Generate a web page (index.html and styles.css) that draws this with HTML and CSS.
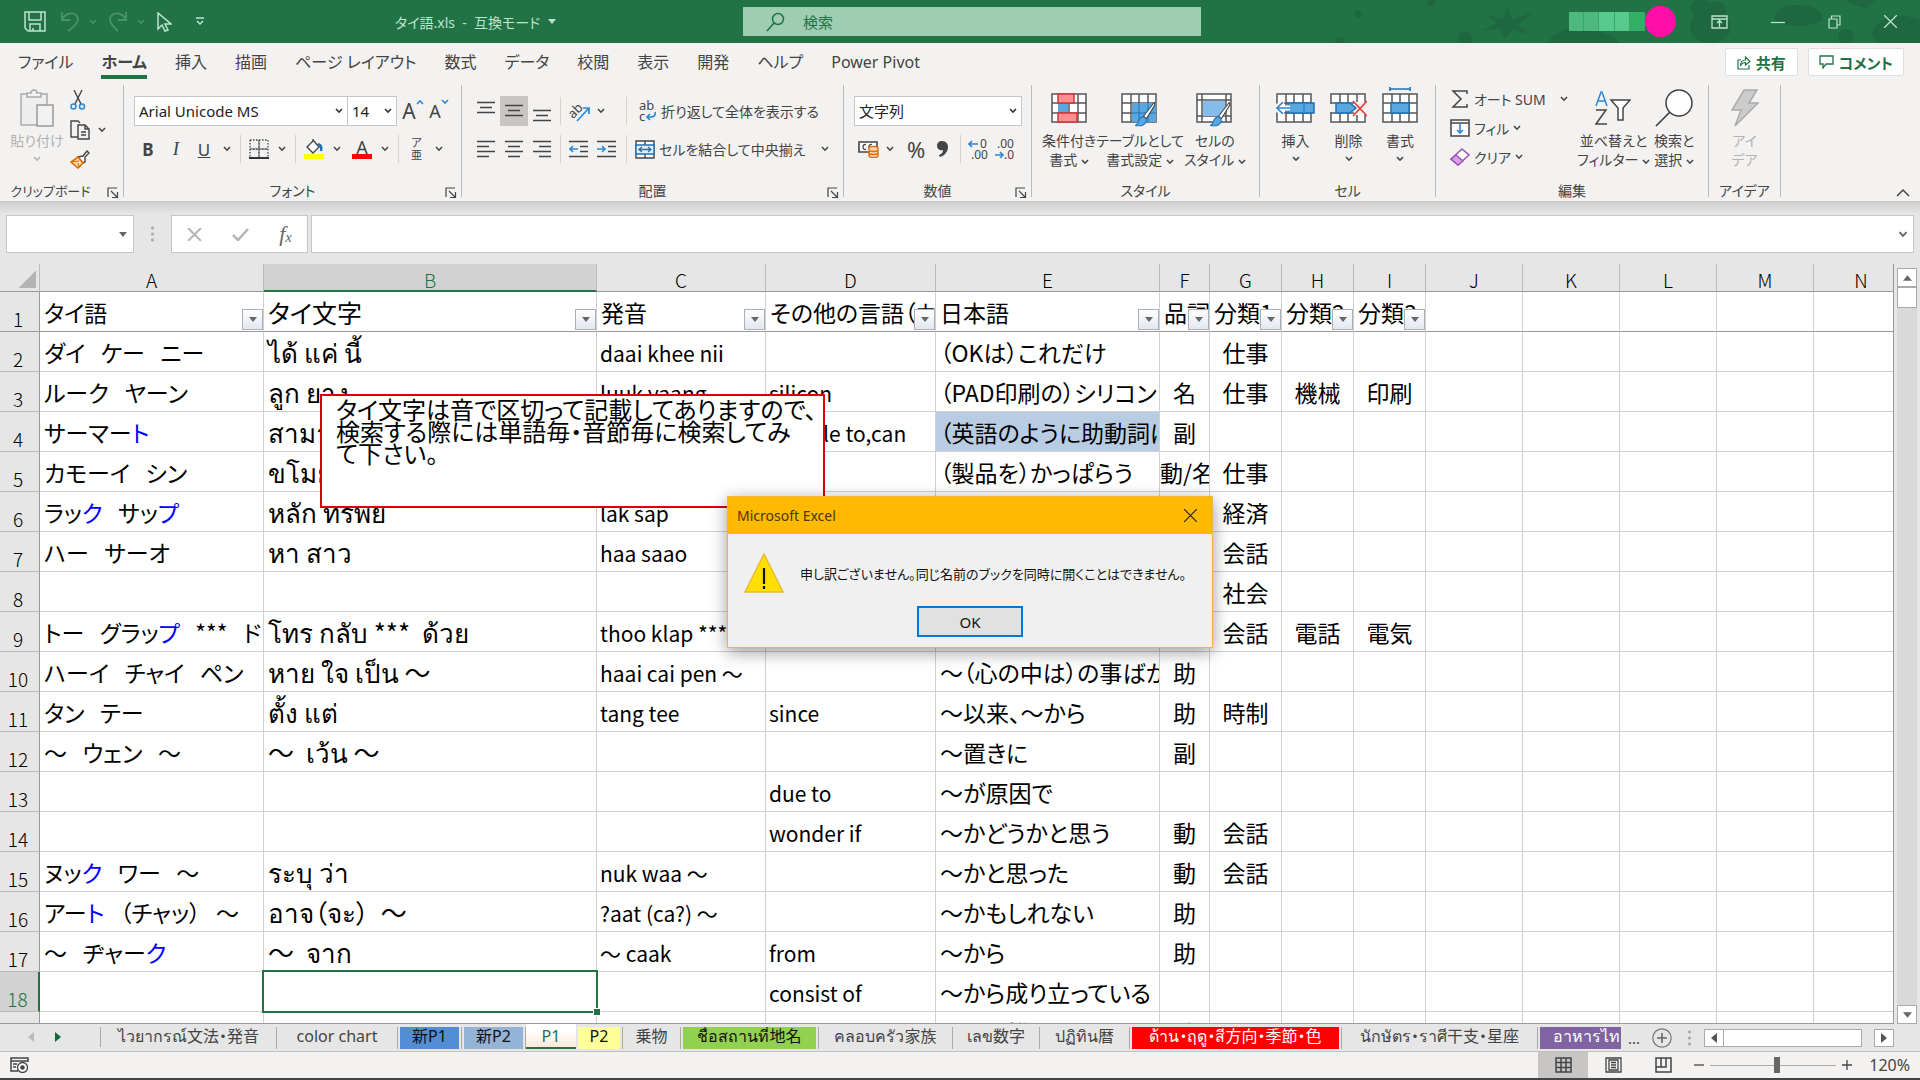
FILE: index.html
```html
<!DOCTYPE html>
<html lang="ja">
<head>
    <meta charset="UTF-8">
    <meta name="viewport" content="width=device-width, initial-scale=1.0">
    <title>タイ語.xls - 互換モード</title>
    <link rel="stylesheet" href="styles.css">
</head>
<body>
    <!-- Shared icons -->
    <svg class="sprite" width="0" height="0" aria-hidden="true">
        <symbol id="chev" viewBox="0 0 8 6"><path d="M1 1l3 3.2L7 1" fill="none" stroke="currentColor" stroke-width="1.6"/></symbol>
        <symbol id="tri" viewBox="0 0 8 5"><path d="M0 0h8L4 5z" fill="currentColor"/></symbol>
        <symbol id="launch" viewBox="0 0 12 12"><path d="M1 10V1h9M4 4l6 6M10.500 5v5.500H5" fill="none" stroke="currentColor" stroke-width="1.200"/></symbol>
        <symbol id="grid" viewBox="0 0 36 30"><path d="M1 1h34v28H1zM1 10h34M1 20h34M10 1v28M18 1v28M27 1v28" fill="#fff" stroke="#555" stroke-width="1.500"/></symbol>
        <symbol id="brush" viewBox="0 0 28 34"><path d="M26 2L12 20l4 3L27 5z" fill="#fff" stroke="#444" stroke-width="1.400"/><path d="M1 32c5 0 3-9 9-11 4-1 7 3 5 7-2 4-8 5-14 4z" fill="#5aa7e0" stroke="#1e72b8" stroke-width="1.400"/></symbol>
    </svg>

    <header class="titlebar">
        <div class="title-left">
            <button class="tb save" aria-label="上書き保存"><svg width="22" height="21" viewBox="0 0 22 21"><path d="M1 1h20v19H4l-3-3zM5 1v8h12V1M6 20v-7h10v7M9 20v-3" fill="none" stroke="currentColor" stroke-width="1.500"/></svg></button>
            <button class="tb dim" aria-label="元に戻す"><svg width="20" height="21" viewBox="0 0 20 21"><path d="M2 1v8h8M2 8C6 2 12 1 16 4c4 4 2 9-8 16" fill="none" stroke="currentColor" stroke-width="1.800"/></svg><svg class="chev" width="8" height="6"><use href="#chev"/></svg></button>
            <button class="tb dim redo" aria-label="やり直し"><svg width="20" height="21" viewBox="0 0 20 21"><path d="M18 1v8h-8M18 8C14 2 8 1 4 4c-4 4-2 9 6 16" fill="none" stroke="currentColor" stroke-width="1.800"/></svg><svg class="chev" width="8" height="6"><use href="#chev"/></svg></button>
            <button class="tb cursor" aria-label="オブジェクトの選択"><svg width="15" height="20" viewBox="0 0 15 20"><path d="M1 1v16l4-4 3 6 3-1-3-6h6z" fill="none" stroke="currentColor" stroke-width="1.500"/></svg></button>
            <button class="tb more" aria-label="クイック アクセス ツール バーのユーザー設定"><svg width="10" height="9" viewBox="0 0 10 9"><path d="M1 1h8M2 4l3 3 3-3" fill="none" stroke="currentColor" stroke-width="1.500"/></svg></button>
            <h1 class="doc-title">タイ語.xls &nbsp;-&nbsp; 互換モード <svg width="8" height="5"><use href="#tri"/></svg></h1>
        </div>
        <label class="search">
            <svg width="19" height="20" viewBox="0 0 19 20"><circle cx="12" cy="7" r="5.500" fill="none" stroke="currentColor" stroke-width="1.500"/><path d="M8 11l-7 8" stroke="currentColor" stroke-width="1.700"/></svg>
            <input type="text" placeholder="検索" aria-label="検索">
        </label>
        <div class="title-right">
            <svg class="doodles" width="600" height="43" viewBox="0 0 600 43" aria-hidden="true">
                <g fill="#1c5f3b" opacity="0.55">
                    <circle cx="38" cy="14" r="4"/><circle cx="145" cy="38" r="7"/><circle cx="111" cy="2" r="4"/><circle cx="20" cy="42" r="5"/>
                    <path d="M165 14l18 6 4-14 5 14 22-8-17 13 14 9-19-4-8 9-4-11-18 3 15-8z"/>
                    <path d="M229 43c2-12 26-18 44-13 16 3 24 8 26 13z"/>
                    <path d="M370 8c2-8 12-12 20-5 10-5 18 2 16 12 10 16 2 26-14 28-18 0-28-12-18-28z"/>
                    <path d="M454 20c0-10 12-16 24-15 14 0 24 5 25 14-8 8-36 10-49 1z"/>
                    <circle cx="526" cy="37" r="8"/>
                    <path d="M552 34c4-14 18-20 34-18l14 4v23h-44z"/>
                    <path d="M530 4l16 4 10-8h-30z"/>
                </g>
            </svg>
            <span class="account"><i></i><i></i><i></i><i></i><i></i></span>
            <span class="avatar"></span>
            <button class="win" aria-label="リボンの表示オプション"><svg width="17" height="14" viewBox="0 0 17 14"><path d="M1 1h15v12H1zM1 4h15M8.500 12V6M6 8l2.500-2.500L11 8" fill="none" stroke="currentColor" stroke-width="1.300"/></svg></button>
            <button class="win" aria-label="最小化"><svg width="14" height="14" viewBox="0 0 14 14"><path d="M0 7.500h14" stroke="currentColor" stroke-width="1.200"/></svg></button>
            <button class="win" aria-label="元に戻す (縮小)"><svg width="13" height="14" viewBox="0 0 13 14"><path d="M1 4h8v9H1zM3.500 4V1H12v9H9" fill="none" stroke="currentColor" stroke-width="1.200"/></svg></button>
            <button class="win" aria-label="閉じる"><svg width="13" height="13" viewBox="0 0 13 13"><path d="M0 0l13 13M13 0L0 13" stroke="currentColor" stroke-width="1.300"/></svg></button>
        </div>
    </header>

    <nav class="ribbon-tabs">
        <a href="#">ファイル</a>
        <a href="#" class="active">ホーム</a>
        <a href="#">挿入</a>
        <a href="#">描画</a>
        <a href="#">ページ レイアウト</a>
        <a href="#">数式</a>
        <a href="#">データ</a>
        <a href="#">校閲</a>
        <a href="#">表示</a>
        <a href="#">開発</a>
        <a href="#">ヘルプ</a>
        <a href="#">Power Pivot</a>
        <button class="share first"><svg width="14" height="15" viewBox="0 0 14 15"><path d="M4 5H1v9h11v-4M3.500 11c0-4 2-6 5-6V2l4.500 4.500L8.500 10V7.500c-2 0-4 1-5 3.500z" fill="none" stroke="currentColor" stroke-width="1.200"/></svg>共有</button>
        <button class="share"><svg width="15" height="14" viewBox="0 0 15 14"><path d="M1 1h13v8H7l-3 4V9H1z" fill="none" stroke="currentColor" stroke-width="1.300"/></svg>コメント</button>
    </nav>

    <!-- Ribbon -->
    <section class="ribbon">
        <div class="group">
            <div class="body clip">
                <button class="big disabled">
                    <svg width="34" height="38" viewBox="0 0 34 38"><path d="M1 5h26v31H1z" fill="#eee" stroke="#aaa" stroke-width="1.500"/><path d="M7 8V4h4c0-4 6-4 6 0h4v4z" fill="#f3f2f1" stroke="#aaa" stroke-width="1.500"/><path d="M17 16h16v21H17z" fill="#f1f1f1" stroke="#999" stroke-width="1.500"/></svg>
                    <span>貼り付け</span><svg class="chev" width="8" height="6"><use href="#chev"/></svg>
                </button>
                <div class="clip-col">
                    <button aria-label="切り取り"><svg width="16" height="20" viewBox="0 0 16 20"><path d="M4 0l7 14M12 0L5 14" stroke="#444" stroke-width="1.400"/><circle cx="3.500" cy="16.500" r="2.500" fill="none" stroke="#2b88d8" stroke-width="1.500"/><circle cx="12" cy="16.500" r="2.500" fill="none" stroke="#2b88d8" stroke-width="1.500"/></svg></button>
                    <button aria-label="コピー"><svg width="20" height="20" viewBox="0 0 20 20"><path d="M8 17H1V1h7l2 2" fill="none" stroke="#444" stroke-width="1.400"/><path d="M8 5h7l4 4v10H8zM15 5v4h4M11 12h5M11 15h5" fill="none" stroke="#444" stroke-width="1.400"/></svg><svg class="chev" width="8" height="6"><use href="#chev"/></svg></button>
                    <button aria-label="書式のコピー"><svg width="20" height="19" viewBox="0 0 20 19"><path d="M8 7l5-1 4-5 2 2-4 4 0 5-2 1z" fill="#fff" stroke="#444" stroke-width="1.400"/><path d="M8 7l5 6-5 5-7-6z" fill="#fbd8b5" stroke="#e06c00" stroke-width="1.600"/><path d="M1 12l8-1M9 18l-1-5" stroke="#e06c00"/></svg></button>
                </div>
            </div>
            <div class="label">クリップボード<svg class="launch" width="12" height="12"><use href="#launch"/></svg></div>
        </div>

        <div class="group">
            <div class="body rows font">
                <div class="row">
                    <select class="combo font-name" aria-label="フォント"><option>Arial Unicode MS</option></select>
                    <select class="combo font-size" aria-label="フォント サイズ"><option>14</option></select>
                    <button class="grow" aria-label="フォント サイズの拡大"><span class="letter big-a">A</span><svg width="8" height="6" viewBox="0 0 8 6"><path d="M1 5l3-3 3 3" fill="none" stroke="#2b88d8" stroke-width="1.600"/></svg></button>
                    <button class="shrink" aria-label="フォント サイズの縮小"><span class="letter">A</span><svg width="8" height="6" viewBox="0 0 8 6"><path d="M1 1l3 3 3-3" fill="none" stroke="#2b88d8" stroke-width="1.600"/></svg></button>
                </div>
                <div class="row">
                    <button class="fmt"><b>B</b></button>
                    <button class="fmt"><i class="it">I</i></button>
                    <button class="fmt"><u>U</u></button>
                    <svg class="chev first" width="8" height="6"><use href="#chev"/></svg>
                    <span class="sep"></span>
                    <button aria-label="罫線"><svg width="20" height="20" viewBox="0 0 20 20"><path d="M1 1h18M1 1v17M19 1v17M10 1v17M1 10h18" stroke="#444" stroke-width="1.300" stroke-dasharray="1.500 1.500"/><path d="M1 10h18M10 1v18" stroke="#666" stroke-width="1"/><path d="M0 19h20" stroke="#333" stroke-width="2"/></svg></button>
                    <svg class="chev" width="8" height="6"><use href="#chev"/></svg>
                    <span class="sep"></span>
                    <button aria-label="塗りつぶしの色"><svg width="20" height="20" viewBox="0 0 20 20"><path d="M0 15h20v5H0z" fill="#ff0"/><path d="M9 1l6 7-6 6-6-6 6-6V0" fill="#fff" stroke="#444" stroke-width="1.400"/><path d="M14 5c3 1 4 3 3 7" fill="none" stroke="#1e72b8" stroke-width="2.500"/></svg></button>
                    <svg class="chev" width="8" height="6"><use href="#chev"/></svg>
                    <button class="font-color" aria-label="フォントの色"><span>A</span></button>
                    <svg class="chev" width="8" height="6"><use href="#chev"/></svg>
                    <span class="sep"></span>
                    <button class="ruby" aria-label="ふりがな"><small>ア</small><small>亜</small></button>
                    <svg class="chev" width="8" height="6"><use href="#chev"/></svg>
                </div>
            </div>
            <div class="label">フォント<svg class="launch" width="12" height="12"><use href="#launch"/></svg></div>
        </div>

        <div class="group">
            <div class="body rows align">
                <div class="row">
                    <button class="al" aria-label="上揃え"><svg width="18" height="28" viewBox="0 0 18 28"><path d="M0 5.500h18M3 10.500h12M0 15.500h18" stroke="#444" stroke-width="1.500"/></svg></button>
                    <button class="al on" aria-label="上下中央揃え"><svg width="18" height="28" viewBox="0 0 18 28"><path d="M0 8.500h18M3 13.500h12M0 18.500h18" stroke="#444" stroke-width="1.500"/></svg></button>
                    <button class="al" aria-label="下揃え"><svg width="18" height="28" viewBox="0 0 18 28"><path d="M0 13.500h18M3 18.500h12M0 23.500h18" stroke="#444" stroke-width="1.500"/></svg></button>
                    <span class="sep"></span>
                    <button aria-label="方向"><svg width="22" height="22" viewBox="0 0 22 22"><text x="-2" y="15" transform="rotate(-45 6 10)" font-size="13" fill="#444">ab</text><path d="M8 21L20 8M14 8h6v6" fill="none" stroke="#2b88d8" stroke-width="1.700"/></svg></button>
                    <svg class="chev" width="8" height="6"><use href="#chev"/></svg>
                    <span class="sep wide"></span>
                    <button class="text"><svg width="20" height="24" viewBox="0 0 20 24"><text x="2" y="11" font-size="13" fill="#444">ab</text><text x="2" y="22" font-size="13" fill="#444">c</text><path d="M18 13c1 3-1 5-4 5h-4M13 15l-3 3 3 3" fill="none" stroke="#2b88d8" stroke-width="1.700"/></svg>折り返して全体を表示する</button>
                </div>
                <div class="row">
                    <button class="al" aria-label="左揃え"><svg width="18" height="18" viewBox="0 0 18 18"><path d="M0 1.500h18M0 6.500h12M0 11.500h18M0 16.500h12" stroke="#444" stroke-width="1.500"/></svg></button>
                    <button class="al" aria-label="中央揃え"><svg width="18" height="18" viewBox="0 0 18 18"><path d="M0 1.500h18M3 6.500h12M0 11.500h18M3 16.500h12" stroke="#444" stroke-width="1.500"/></svg></button>
                    <button class="al" aria-label="右揃え"><svg width="18" height="18" viewBox="0 0 18 18"><path d="M0 1.500h18M6 6.500h12M0 11.500h18M6 16.500h12" stroke="#444" stroke-width="1.500"/></svg></button>
                    <span class="sep"></span>
                    <button aria-label="インデントを減らす"><svg width="19" height="18" viewBox="0 0 19 18"><path d="M0 1.500h19M11 6.500h8M11 11.500h8M0 16.500h19" stroke="#444" stroke-width="1.500"/><path d="M9 9H1M4 6L1 9l3 3" fill="none" stroke="#2b88d8" stroke-width="1.600"/></svg></button>
                    <button class="indent" aria-label="インデントを増やす"><svg width="19" height="18" viewBox="0 0 19 18"><path d="M0 1.500h19M11 6.500h8M11 11.500h8M0 16.500h19" stroke="#444" stroke-width="1.500"/><path d="M0 9h8M5 6l3 3-3 3" fill="none" stroke="#2b88d8" stroke-width="1.600"/></svg></button>
                    <span class="sep near"></span>
                    <button class="text"><svg width="20" height="19" viewBox="0 0 20 19"><path d="M1 1h18v17H1zM10 1v4M10 14v4" fill="#fff" stroke="#444" stroke-width="1.400"/><path d="M1 5h18v9H1z" fill="#e3f0fa" stroke="#1e72b8" stroke-width="1.400"/><path d="M4 9.500h12M7 7L4 9.500 7 12M13 7l3 2.500-3 2.500" fill="none" stroke="#1e72b8" stroke-width="1.300"/></svg>セルを結合して中央揃え</button>
                    <svg class="chev merge" width="8" height="6"><use href="#chev"/></svg>
                </div>
            </div>
            <div class="label">配置<svg class="launch" width="12" height="12"><use href="#launch"/></svg></div>
        </div>

        <div class="group">
            <div class="body rows number">
                <div class="row"><select class="combo num-format" aria-label="数値の書式"><option>文字列</option></select></div>
                <div class="row">
                    <button aria-label="通貨表示形式"><svg width="21" height="18" viewBox="0 0 21 18"><path d="M1 2h18v10H1z" fill="#fff" stroke="#444" stroke-width="1.600"/><path d="M8 4.500c-4-1-4 6 0 5M14 4.500c-4-1-4 6 0 5" fill="none" stroke="#444" stroke-width="1.300"/><path d="M11 8v8c0 2 9 2 9 0V8c0-2-9-2-9 0zM11 10c1 2 8 2 9 0M11 13c1 2 8 2 9 0" fill="#fbd8b5" stroke="#e06c00" stroke-width="1.400"/></svg></button>
                    <svg class="chev" width="8" height="6"><use href="#chev"/></svg>
                    <button class="percent">%</button>
                    <button class="comma" aria-label="桁区切りスタイル"><svg width="11" height="16" viewBox="0 0 11 16"><path d="M5 0c4 0 6 3 6 6 0 5-4 9-8 10l-1-2c3-1 4-3 4-5-3 1-6-1-6-4s2-5 5-5z" fill="#444"/></svg></button>
                    <span class="sep"></span>
                    <button aria-label="小数点以下の表示桁数を増やす"><svg width="20" height="22" viewBox="0 0 20 22"><text x="12" y="10" font-size="12" fill="#444">0</text><text x="3" y="21" font-size="12" fill="#444">.00</text><path d="M10 6H1M4 3L1 6l3 3" fill="none" stroke="#2b88d8" stroke-width="1.600"/></svg></button>
                    <button aria-label="小数点以下の表示桁数を減らす"><svg width="20" height="22" viewBox="0 0 20 22"><text x="2" y="10" font-size="12" fill="#444">.00</text><text x="9" y="21" font-size="12" fill="#444">.0</text><path d="M0 17h8M5 14l3 3-3 3" fill="none" stroke="#2b88d8" stroke-width="1.600"/></svg></button>
                </div>
            </div>
            <div class="label">数値<svg class="launch" width="12" height="12"><use href="#launch"/></svg></div>
        </div>

        <div class="group">
            <div class="body styles">
                <button class="big"><svg width="36" height="38" viewBox="0 -4 36 38"><use href="#grid" width="36" height="30"/><path d="M7 1h16v9H7zM7 20h19v9H7z" fill="#ff8f8f" stroke="#d13438" stroke-width="1.500"/><path d="M7 11h10v8H7z" fill="#5aa7e0"/></svg><span>条件付き<br>書式 <svg class="chev" width="8" height="6"><use href="#chev"/></svg></span></button>
                <button class="big"><svg width="38" height="38" viewBox="0 -4 38 38"><use href="#grid" width="36" height="30"/><path d="M11 10h24v19H11z" fill="#5aa7e0"/><path d="M11 20h24M18 10v19M27 10v19" stroke="#1e72b8"/><use href="#brush" x="10" y="8" width="28" height="26"/></svg><span>テーブルとして<br>書式設定 <svg class="chev" width="8" height="6"><use href="#chev"/></svg></span></button>
                <button class="big"><svg width="38" height="38" viewBox="0 -4 38 38"><path d="M1 1h34v28H1zM1 7h34M1 23h34M6 1v28M30 1v28" fill="#fff" stroke="#555" stroke-width="1.500"/><path d="M7 8h22v15H7z" fill="#84bdeb"/><use href="#brush" x="10" y="8" width="28" height="26"/></svg><span>セルの<br>スタイル <svg class="chev" width="8" height="6"><use href="#chev"/></svg></span></button>
            </div>
            <div class="label">スタイル</div>
        </div>

        <div class="group">
            <div class="body cells">
                <button class="big"><svg width="39" height="38" viewBox="0 -4 39 38"><use href="#grid" width="36" height="30"/><path d="M12 10h26v10H12z" fill="#5aa7e0" stroke="#1e72b8" stroke-width="1.500"/><path d="M0 15h14M7 8l-7 7 7 7" fill="none" stroke="#fff" stroke-width="5"/><path d="M1 15h13M7 9l-6 6 6 6M28 10v10" fill="none" stroke="#2b88d8" stroke-width="1.600"/></svg><span>挿入</span><svg class="chev" width="8" height="6"><use href="#chev"/></svg></button>
                <button class="big"><svg width="37" height="38" viewBox="0 -4 37 38"><use href="#grid" width="36" height="30"/><path d="M0 11h6v8H0zM24 9h13v13H24z" fill="#f3f2f1"/><path d="M6 10h14l6 5-6 5H6z" fill="#5aa7e0" stroke="#1e72b8" stroke-width="1.500"/><path d="M23 8l14 15M37 8L23 23" stroke="#e8413c" stroke-width="1.800"/></svg><span>削除</span><svg class="chev" width="8" height="6"><use href="#chev"/></svg></button>
                <button class="big"><svg width="36" height="40" viewBox="0 -6 36 40"><use href="#grid" width="36" height="30"/><path d="M9 10h18v10H9z" fill="#5aa7e0" stroke="#1e72b8" stroke-width="1.500"/><path d="M8-4h20M8-6v4M28-6v4" stroke="#1e72b8" stroke-width="1.600"/></svg><span>書式</span><svg class="chev" width="8" height="6"><use href="#chev"/></svg></button>
            </div>
            <div class="label">セル</div>
        </div>

        <div class="group">
            <div class="body edit">
                <div class="edit-col">
                    <button class="text"><svg width="20" height="18" viewBox="0 0 20 18"><path d="M17 4V1H3l8 8-8 8h14v-3" fill="none" stroke="#444" stroke-width="1.500"/></svg>オート SUM <svg class="chev far" width="8" height="6"><use href="#chev"/></svg></button>
                    <button class="text"><svg width="20" height="18" viewBox="0 0 20 18"><path d="M1 1h18v16H1zM1 4h18" fill="#fff" stroke="#444" stroke-width="1.500"/><path d="M10 5v9M7 11l3 3 3-3" fill="none" stroke="#2b88d8" stroke-width="1.600"/></svg>フィル <svg class="chev" width="8" height="6"><use href="#chev"/></svg></button>
                    <button class="text"><svg width="20" height="18" viewBox="0 0 20 18"><path d="M12 1l7 6-11 10-7-6z" fill="#fff" stroke="#9b4fb5" stroke-width="1.500"/><path d="M6 7l7 6-5 4-7-6z" fill="#df9be8" stroke="#9b4fb5" stroke-width="1.300"/></svg>クリア <svg class="chev" width="8" height="6"><use href="#chev"/></svg></button>
                </div>
                <button class="big"><svg width="36" height="38" viewBox="0 0 36 38"><path d="M1 17L6 3h1l5 14M3 12h7" fill="none" stroke="#2b88d8" stroke-width="1.500"/><path d="M1 21h10L1 35h11" fill="none" stroke="#444" stroke-width="1.500"/><path d="M16 11h19l-7 8v12h-5V19z" fill="#fff" stroke="#444" stroke-width="1.500"/></svg><span>並べ替えと<br>フィルター <svg class="chev" width="8" height="6"><use href="#chev"/></svg></span></button>
                <button class="big"><svg width="38" height="38" viewBox="0 0 38 38"><circle cx="24" cy="14" r="13" fill="#fff" stroke="#444" stroke-width="1.500"/><path d="M15 23L1 37" stroke="#444" stroke-width="1.700"/></svg><span>検索と<br>選択 <svg class="chev" width="8" height="6"><use href="#chev"/></svg></span></button>
            </div>
            <div class="label">編集</div>
        </div>

        <div class="group">
            <div class="body idea">
                <button class="big disabled"><svg width="28" height="38" viewBox="0 0 28 38"><path d="M13 1h13l-8 13h9L4 37l6-16H1z" fill="#ccc" stroke="#aaa" stroke-width="1.500"/></svg><span>アイ<br>デア</span></button>
            </div>
            <div class="label">アイデア</div>
        </div>
        <button class="collapse" aria-label="リボンを折りたたむ"><svg width="14" height="9" viewBox="0 0 14 9"><path d="M1 8l6-6 6 6" fill="none" stroke="currentColor" stroke-width="1.500"/></svg></button>
    </section>

    <!-- Formula bar -->
    <div class="formula-bar">
        <div class="name-box"><input type="text" aria-label="名前ボックス"><svg width="8" height="5"><use href="#tri"/></svg></div>
        <span class="dots"></span>
        <div class="fx">
            <button aria-label="キャンセル"><svg width="15" height="13" viewBox="0 0 15 13"><path d="M1 0l13 13M14 0L1 13" stroke="#b5b5b5" stroke-width="2"/></svg></button>
            <button aria-label="入力"><svg width="17" height="13" viewBox="0 0 17 13"><path d="M1 7l5 5L16 1" fill="none" stroke="#b5b5b5" stroke-width="2.500"/></svg></button>
            <button class="fn"><i>f</i><i class="x">x</i></button>
        </div>
        <div class="formula"><input type="text" aria-label="数式バー"><svg width="10" height="7"><use href="#chev"/></svg></div>
    </div>

    <!-- Worksheet -->
    <main class="sheet">
        <div class="grid">
            <table>
                <colgroup>
                    <col class="c-num"><col class="c-a"><col class="c-b"><col class="c-c"><col class="c-d"><col class="c-e"><col class="c-f"><col class="c-g"><col class="c-g"><col class="c-g"><col class="c-j"><col class="c-j"><col class="c-j"><col class="c-j"><col>
                </colgroup>
                <thead>
                    <tr><th class="corner"></th><th>A</th><th class="sel">B</th><th>C</th><th>D</th><th>E</th><th>F</th><th>G</th><th>H</th><th>I</th><th>J</th><th>K</th><th>L</th><th>M</th><th>N</th></tr>
                </thead>
                <tbody>
                    <tr class="head">
                        <th>1</th>
                        <td>タイ語<button class="filter" aria-label="フィルター"></button></td>
                        <td>タイ文字<button class="filter" aria-label="フィルター"></button></td>
                        <td>発音<button class="filter" aria-label="フィルター"></button></td>
                        <td>その他の言語（カナ）<button class="filter" aria-label="フィルター"></button></td>
                        <td>日本語<button class="filter" aria-label="フィルター"></button></td>
                        <td>品詞<button class="filter" aria-label="フィルター"></button></td>
                        <td>分類1<button class="filter" aria-label="フィルター"></button></td>
                        <td>分類2<button class="filter" aria-label="フィルター"></button></td>
                        <td>分類3<button class="filter" aria-label="フィルター"></button></td>
                        <td></td><td></td><td></td><td></td><td></td>
                    </tr>
                    <tr><th>2</th><td>ダイ   ケー   ニー</td><td>ได้ แค่ นี้</td><td>daai khee nii</td><td></td><td>（OKは）これだけ</td><td></td><td>仕事</td><td></td><td></td><td></td><td></td><td></td><td></td><td></td></tr>
                    <tr><th>3</th><td>ルーク   ヤーン</td><td>ลูก ยาง</td><td>luuk yaang</td><td>silicon</td><td>（PAD印刷の）シリコン</td><td>名</td><td>仕事</td><td>機械</td><td>印刷</td><td></td><td></td><td></td><td></td><td></td></tr>
                    <tr><th>4</th><td>サーマー<span class="end">ト</span></td><td>สามารถ</td><td>saamaat</td><td>be able to,can</td><td class="blue">（英語のように助動詞に）</td><td>副</td><td></td><td></td><td></td><td></td><td></td><td></td><td></td><td></td></tr>
                    <tr><th>5</th><td>カモーイ   シン</td><td>ขโมย</td><td></td><td></td><td>（製品を）かっぱらう</td><td>動/名</td><td>仕事</td><td></td><td></td><td></td><td></td><td></td><td></td><td></td></tr>
                    <tr><th>6</th><td>ラッ<span class="end">ク</span>   サッ<span class="end">プ</span></td><td>หลัก ทรัพย์</td><td>lak sap</td><td></td><td></td><td></td><td>経済</td><td></td><td></td><td></td><td></td><td></td><td></td><td></td></tr>
                    <tr><th>7</th><td>ハー   サーオ</td><td>หา สาว</td><td>haa saao</td><td></td><td></td><td></td><td>会話</td><td></td><td></td><td></td><td></td><td></td><td></td><td></td></tr>
                    <tr><th>8</th><td></td><td></td><td></td><td></td><td></td><td></td><td>社会</td><td></td><td></td><td></td><td></td><td></td><td></td><td></td></tr>
                    <tr><th>9</th><td>トー   グラッ<span class="end">プ</span>   ***   ドゥアイ</td><td>โทร กลับ ***  ด้วย</td><td>thoo klap ***</td><td></td><td></td><td></td><td>会話</td><td>電話</td><td>電気</td><td></td><td></td><td></td><td></td><td></td></tr>
                    <tr><th>10</th><td>ハーイ   チャイ   ペン</td><td>หาย ใจ เป็น ～</td><td>haai cai pen ～</td><td></td><td>～（心の中は）の事ばかり</td><td>助</td><td></td><td></td><td></td><td></td><td></td><td></td><td></td><td></td></tr>
                    <tr><th>11</th><td>タン   テー</td><td>ตั้ง แต่</td><td>tang tee</td><td>since</td><td>～以来、～から</td><td>助</td><td>時制</td><td></td><td></td><td></td><td></td><td></td><td></td><td></td></tr>
                    <tr><th>12</th><td>～   ウェン   ～</td><td>～  เว้น ～</td><td></td><td></td><td>～置きに</td><td>副</td><td></td><td></td><td></td><td></td><td></td><td></td><td></td><td></td></tr>
                    <tr><th>13</th><td></td><td></td><td></td><td>due to</td><td>～が原因で</td><td></td><td></td><td></td><td></td><td></td><td></td><td></td><td></td><td></td></tr>
                    <tr><th>14</th><td></td><td></td><td></td><td>wonder if</td><td>～かどうかと思う</td><td>動</td><td>会話</td><td></td><td></td><td></td><td></td><td></td><td></td><td></td></tr>
                    <tr><th>15</th><td>ヌッ<span class="end">ク</span>   ワー   ～</td><td>ระบุ ว่า</td><td>nuk waa ～</td><td></td><td>～かと思った</td><td>動</td><td>会話</td><td></td><td></td><td></td><td></td><td></td><td></td><td></td></tr>
                    <tr><th>16</th><td>アー<span class="end">ト</span>   （チャッ）   ～</td><td>อาจ（จะ）  ～</td><td>?aat (ca?) ～</td><td></td><td>～かもしれない</td><td>助</td><td></td><td></td><td></td><td></td><td></td><td></td><td></td><td></td></tr>
                    <tr><th>17</th><td>～   ヂャー<span class="end">ク</span></td><td>～  จาก</td><td>～ caak</td><td>from</td><td>～から</td><td>助</td><td></td><td></td><td></td><td></td><td></td><td></td><td></td><td></td></tr>
                    <tr><th class="sel">18</th><td></td><td class="active-cell"></td><td></td><td>consist of</td><td>～から成り立っている</td><td></td><td></td><td></td><td></td><td></td><td></td><td></td><td></td><td></td></tr>
                    <tr><th></th><td></td><td></td><td></td><td></td><td>～から離れる</td><td>動</td><td></td><td></td><td></td><td></td><td></td><td></td><td></td><td></td></tr>
                </tbody>
            </table>
            <p class="note">タイ文字は音で区切って記載してありますので、<br>検索する際には単語毎・音節毎に検索してみ<br>て下さい。</p>
        </div>
        <div class="vscroll">
            <button class="up" aria-label="上へスクロール"><svg width="9" height="6" viewBox="0 0 8 5"><path d="M0 5h8L4 0z" fill="#666"/></svg></button>
            <div class="thumb"></div>
            <button class="down" aria-label="下へスクロール"><svg width="9" height="6"><use href="#tri"/></svg></button>
        </div>
    </main>

    <!-- Sheet tabs -->
    <nav class="sheet-tabs">
        <div class="arrows">
            <button aria-label="前のシート"><svg width="6" height="10" viewBox="0 0 6 10"><path d="M6 0v10L0 5z" fill="#bbb"/></svg></button>
            <button aria-label="次のシート"><svg width="6" height="10" viewBox="0 0 6 10"><path d="M0 0v10l6-5z" fill="#0e6b3c"/></svg></button>
        </div>
        <a href="#">ไวยากรณ์文法・発音</a>
        <a href="#">color chart</a>
        <a href="#" class="fill blue1"><span>新P1</span></a>
        <a href="#" class="fill blue2"><span>新P2</span></a>
        <a href="#" class="current">P1</a>
        <a href="#" class="fill yellow"><span>P2</span></a>
        <a href="#">乗物</a>
        <a href="#" class="fill green"><span>ชื่อสถานที่地名</span></a>
        <a href="#">คลอบครัว家族</a>
        <a href="#">เลข数字</a>
        <a href="#">ปฏิทิน暦</a>
        <a href="#" class="fill red"><span>ด้าน・ฤดู・สี方向・季節・色</span></a>
        <a href="#">นักษัตร・ราศี干支・星座</a>
        <a href="#" class="fill purple"><span>อาหารไทย</span></a>
        <div class="tab-tools">
            <span class="etc">...</span>
            <button aria-label="新しいシート"><svg width="20" height="20" viewBox="0 0 20 20"><circle cx="10" cy="10" r="9.200" fill="none" stroke="#777" stroke-width="1.200"/><path d="M10 5v10M5 10h10" stroke="#666" stroke-width="1.600"/></svg></button>
            <span class="dots"></span>
        </div>
        <div class="hscroll">
            <button aria-label="左へスクロール"><svg width="6" height="10" viewBox="0 0 6 10"><path d="M6 0v10L0 5z" fill="#555"/></svg></button>
            <div class="thumb"></div>
            <button class="right" aria-label="右へスクロール"><svg width="6" height="10" viewBox="0 0 6 10"><path d="M0 0v10l6-5z" fill="#555"/></svg></button>
        </div>
    </nav>

    <footer class="status">
        <button class="macro" aria-label="マクロの記録"><svg width="19" height="16" viewBox="0 0 19 16"><path d="M8 14H1V1h17v4M1 4h17M3 7h4M3 10h3" fill="none" stroke="#444" stroke-width="1.500"/><circle cx="12.500" cy="10.500" r="5" fill="#fff" stroke="#444" stroke-width="1.300"/><circle cx="12.500" cy="10.500" r="2.300" fill="#444"/></svg></button>
        <button class="view on" aria-label="標準"><svg width="17" height="16" viewBox="0 0 17 16"><path d="M1 1h15v14H1zM1 5.500h15M1 10.500h15M6 1v14M11 1v14" fill="none" stroke="#444" stroke-width="1.500"/></svg></button>
        <button class="view" aria-label="ページ レイアウト"><svg width="17" height="16" viewBox="0 0 17 16"><path d="M1 1h15v14H1zM4 3h9v10H4zM6 5.500h5M6 8h5M6 10.500h5" fill="none" stroke="#444" stroke-width="1.300"/></svg></button>
        <button class="view" aria-label="改ページ プレビュー"><svg width="17" height="16" viewBox="0 0 17 16"><path d="M1 1h15v14H1zM1 10h10V1M6 1v9" fill="none" stroke="#444" stroke-width="1.500"/></svg></button>
        <button class="zoom-btn" aria-label="縮小"><svg width="10" height="10" viewBox="0 0 10 10"><path d="M0 5h10" stroke="#444" stroke-width="1.300"/></svg></button>
        <input class="zoom" type="range" min="0" max="100" value="53" aria-label="ズーム">
        <button class="zoom-btn" aria-label="拡大"><svg width="10" height="10" viewBox="0 0 10 10"><path d="M0 5h10M5 0v10" stroke="#444" stroke-width="1.300"/></svg></button>
        <span class="percent-text">120%</span>
    </footer>

    <!-- Alert -->
    <div class="dialog" role="alertdialog" aria-label="Microsoft Excel">
        <div class="dialog-title"><span>Microsoft Excel</span><button aria-label="閉じる"><svg width="13" height="13" viewBox="0 0 13 13"><path d="M0 0l13 13M13 0L0 13" stroke="#222" stroke-width="1.200"/></svg></button></div>
        <div class="dialog-msg">
            <svg width="40" height="40" viewBox="0 0 40 40"><path d="M20 1l19 38H1z" fill="#ffdf00" stroke="#e8b93a" stroke-width="1.500"/><path d="M20 15v16M20 33v3" stroke="#111" stroke-width="2.200"/></svg>
            <p>申し訳ございません。同じ名前のブックを同時に開くことはできません。</p>
        </div>
        <button class="ok">OK</button>
    </div>
</body>
</html>
```
FILE: styles.css
```css
* {
    margin: 0;
    padding: 0;
    box-sizing: border-box;
}

body {
    height: 100vh;
    display: flex;
    flex-direction: column;
    overflow: hidden;
    background: #e6e6e6;
    border-bottom: 2px solid #444;
    font-family: "Noto Sans", "Noto Sans CJK JP", sans-serif;
    font-feature-settings: "palt";
    font-size: 15px;
    color: #444;
}

button, input, select {
    font: inherit;
    font-feature-settings: inherit;
    color: inherit;
    background: none;
    border: none;
    border-radius: 0;
}

button {
    display: flex;
    align-items: center;
    white-space: nowrap;
}

a {
    color: inherit;
    text-decoration: none;
}

svg {
    flex: none;
}

.sprite {
    position: absolute;
}

/* Title bar */
.titlebar {
    display: grid;
    grid-template-columns: 743fr 458fr 719fr;
    height: 43px;
    background: #217346;
    color: #bfe3cd;
}

.title-left {
    display: flex;
    align-items: center;
    padding-left: 24px;
}

.tb.dim {
    color: #4b9269;
    gap: 9px;
    margin-left: 14px;
}

.tb.redo {
    margin-left: 11px;
}

.tb.cursor {
    margin-left: 12px;
}

.tb.more {
    margin-left: 23px;
}

.doc-title {
    display: flex;
    align-items: center;
    gap: 8px;
    margin-left: 190px;
    font-size: 14px;
    font-weight: 400;
}

.search {
    display: flex;
    align-items: center;
    gap: 18px;
    margin: 7px 0;
    padding-left: 23px;
    background: #9fcdb3;
    color: #217346;
}

.search input::placeholder {
    color: #217346;
    opacity: 1;
}

.title-right {
    position: relative;
    display: flex;
    align-items: center;
    justify-content: flex-end;
    padding-right: 23px;
}

.doodles {
    position: absolute;
    right: 0;
    top: 0;
}

.account {
    display: flex;
    height: 19px;
    width: 76px;
    z-index: 1;
}

.account i {
    flex: 1;
    background: #4db97c;
    border-right: 1px solid #3aa568;
}

.account i:nth-child(3), .account i:nth-child(4) {
    background: #58cb8c;
}

.account i:last-child {
    background: #33b066;
}

.avatar {
    width: 31px;
    height: 31px;
    margin-right: 35px;
    border-radius: 50%;
    background: #ff0fa8;
    z-index: 1;
}

.win {
    margin-left: 43px;
    z-index: 1;
}

.avatar + .win {
    margin-left: 0;
}

/* Ribbon tabs */
.ribbon-tabs {
    display: flex;
    align-items: flex-start;
    gap: 28px;
    height: 39px;
    padding: 5px 16px 0 18px;
    background: #f3f2f1;
    font-size: 16px;
}

.ribbon-tabs a {
    height: 31px;
    line-height: 28px;
    white-space: nowrap;
}

.ribbon-tabs a.active {
    font-weight: 700;
    border-bottom: 4px solid #217346;
}

.share {
    height: 28px;
    gap: 5px;
    padding: 0 10px;
    margin-left: -18px;
    background: #fff;
    border: 1px solid #e1dfdd;
    border-radius: 2px;
    color: #217346;
    font-size: 15px;
    font-weight: 700;
}

.share.first {
    margin-left: auto;
    padding: 0 11px;
}

/* Ribbon */
.ribbon {
    position: relative;
    display: flex;
    height: 120px;
    background: #f3f2f1;
    border-bottom: 1px solid #c8c8c8;
}

.group {
    display: flex;
    flex-direction: column;
    margin: 3px 0 4px;
    border-right: 1px solid #bbb;
    flex: none;
}

.group:nth-child(1) { width: 124px; }
.group:nth-child(2) { width: 338px; }
.group:nth-child(3) { width: 382px; }
.group:nth-child(4) { width: 188px; }
.group:nth-child(5) { width: 228px; }
.group:nth-child(6) { width: 176px; }
.group:nth-child(7) { width: 273px; }
.group:nth-child(8) { width: 72px; }

.body {
    flex: 1;
    display: flex;
}

.label {
    position: relative;
    height: 16px;
    margin-bottom: -2px;
    line-height: 16px;
    font-size: 14px;
    text-align: center;
}

.group:first-child .label {
    padding-right: 22px;
    font-size: 13px;
}

.launch {
    position: absolute;
    right: 4px;
    bottom: 0;
}

.big {
    flex-direction: column;
    font-size: 14px;
    line-height: 19px;
    text-align: center;
    padding-top: 4px;
}

.big > span {
    margin-top: 4px;
}

.big > .chev {
    margin-top: 6px;
}

.disabled {
    color: #b1b1b1;
}

.body.clip {
    padding-left: 12px;
}

.clip .big {
    width: 50px;
}

.clip-col {
    display: flex;
    flex-direction: column;
    gap: 10px;
    padding: 5px 0 0 8px;
}

.clip-col button {
    gap: 8px;
}

.rows {
    flex-direction: column;
    gap: 8px;
    padding-top: 11px;
}

.row {
    display: flex;
    align-items: center;
    height: 30px;
}

.combo {
    appearance: none;
    height: 30px;
    padding-left: 4px;
    background: #fff url("data:image/svg+xml,%3Csvg xmlns='http://www.w3.org/2000/svg' width='8' height='6'%3E%3Cpath d='M1 1l3 3 3-3' fill='none' stroke='%23333' stroke-width='1.6'/%3E%3C/svg%3E") no-repeat right 4px center;
    border: 1px solid #c6c6c6;
    color: #222;
}

.font {
    padding-left: 10px;
}

.font-name {
    width: 214px;
}

.font-size {
    width: 50px;
    margin-left: -1px;
}

.num-format {
    width: 168px;
    margin-left: 10px;
}

.grow, .shrink {
    align-items: flex-start;
    margin-left: 5px;
}

.letter {
    font-size: 18px;
    line-height: 24px;
    width: 12px;
}

.letter.big-a {
    font-size: 21px;
    width: 14px;
}

.fmt {
    width: 28px;
    justify-content: center;
    font-size: 17px;
}

.it {
    font-family: "Liberation Serif", serif;
    font-size: 19px;
}

.font .row:last-child .chev {
    margin: 0 9px;
}

.font .row:last-child .chev.first {
    margin-left: 5px;
}

.sep {
    width: 1px;
    height: 28px;
    margin-right: 8px;
    background: #d5d3d1;
}

.font-color {
    justify-content: center;
    width: 20px;
    height: 20px;
    margin-left: 2px;
    border-bottom: 5px solid #f00;
    font-size: 18px;
    line-height: 16px;
}

.ruby {
    flex-direction: column;
    padding: 0 4px;
}

.ruby small {
    font-size: 11px;
    line-height: 12px;
}

.align {
    padding-left: 10px;
}

.al {
    width: 28px;
    height: 30px;
    justify-content: center;
}

.al.on {
    background: #c8c6c4;
}

.align .sep {
    margin: 0 8px 0 4px;
}

.align .chev {
    margin-left: 6px;
}

.align .sep.wide {
    margin: 0 10px 0 21px;
}

.align .sep.near {
    margin-left: 10px;
}

.align .chev.merge {
    margin-left: 16px;
}

.indent {
    margin-left: 9px;
}

.text {
    gap: 4px;
    font-size: 14px;
}

.number .row:last-child {
    padding-left: 14px;
    gap: 7px;
}

.percent {
    margin-left: 6px;
    font-size: 22px;
}

.comma {
    margin: 0 5px;
}

.number .sep {
    margin: 0;
}

.styles {
    justify-content: space-between;
    padding: 0 14px 0 10px;
}

.cells {
    justify-content: space-between;
    padding: 0 17px 0 16px;
}

.cells .big:last-child {
    padding-top: 2px;
}

.edit {
    padding-left: 14px;
}

.edit-col {
    display: flex;
    flex-direction: column;
    gap: 7px;
    width: 127px;
    padding-top: 3px;
}

.edit-col .text {
    height: 22px;
}

.chev.far {
    margin-left: 10px;
}

.edit .big + .big {
    margin-left: 4px;
}

.idea {
    justify-content: center;
}

.collapse {
    position: absolute;
    right: 10px;
    bottom: 4px;
}

/* Formula bar */
.formula-bar {
    display: flex;
    height: 62px;
    padding: 13px 6px 11px;
    background: linear-gradient(#cfcfcf, #e6e6e6 12px);
}

.name-box, .fx, .formula {
    display: flex;
    align-items: center;
    background: #fff;
    border: 1px solid #c6c6c6;
    color: #666;
}

.name-box {
    width: 128px;
    padding-right: 6px;
}

.name-box input, .formula input {
    flex: 1;
    min-width: 0;
    height: 100%;
}

.dots {
    width: 3px;
    height: 17px;
    background: radial-gradient(circle, #aaa 1px, transparent 2px) 0 0 / 3px 6px;
}

.formula-bar .dots {
    margin: 10px 17px;
}

.fx {
    width: 137px;
    justify-content: space-around;
    margin-right: 3px;
}

.fn {
    font-family: "Liberation Serif", serif;
    font-size: 22px;
}

.fn .x {
    font-size: 15px;
    padding-top: 7px;
}

.formula {
    flex: 1;
    padding-right: 5px;
}

/* Worksheet */
.sheet {
    flex: 1;
    min-height: 0;
    display: flex;
}

.grid {
    position: relative;
    flex: 1;
    min-width: 0;
    overflow: hidden;
    border-right: 1px solid #999;
    border-bottom: 1px solid #999;
}

/* last column runs on under the scroll bar */
table {
    width: calc(100% + 16px);
    table-layout: fixed;
    border-collapse: separate;
    border-spacing: 0;
    font-family: "Noto Sans CJK JP", "Noto Sans", sans-serif;
    color: #000;
}

.c-num { width: 40px; }
.c-a { width: 224px; }
.c-b { width: 333px; }
.c-c { width: 169px; }
.c-d { width: 170px; }
.c-e { width: 224px; }
.c-f { width: 50px; }
.c-g { width: 72px; }
.c-j { width: 97px; }

th {
    font-weight: 300;
    font-size: 19px;
    background: #e6e6e6;
}

thead th {
    height: 28px;
    line-height: 20px;
    padding-top: 5px;
    border-right: 1px solid #bbb;
    border-bottom: 1px solid #999;
}

thead th.sel {
    background: #d2d2d2;
    border-bottom: 2px solid #217346;
    color: #217346;
}

.corner {
    background: linear-gradient(to bottom right, transparent 50%, #b4b4b4 50%) no-repeat right 3px bottom 3px / 18px 18px, #e6e6e6;
}

tbody th {
    height: 40px;
    padding: 14px 3px 0 0;
    line-height: 22px;
    border-right: 1px solid #999;
    border-bottom: 1px solid #bbb;
}

tbody th.sel {
    background: #d2d2d2;
    color: #217346;
    border-right: 2px solid #217346;
}

td {
    position: relative;
    height: 40px;
    padding: 0 0 0 4px;
    line-height: 36px;
    font-size: 23px;
    white-space: pre;
    overflow: hidden;
    background: #fff;
    border-right: 1px solid #d0d0d0;
    border-bottom: 1px solid #d0d0d0;
}

td:nth-child(3) {
    font-size: 26px;
}

td:nth-child(4), td:nth-child(5) {
    font-size: 21px;
    padding: 2px 0 0 3px;
}

td:nth-child(n+7) {
    padding-left: 0;
    text-align: center;
}

.head td:nth-child(n) {
    font-size: 23px;
    padding: 0 0 0 4px;
    text-align: left;
}

.head td:nth-child(3) {
    font-size: 25px;
}

.head td, .head th {
    border-bottom-color: #999;
}

td.blue {
    background: #b8cce4;
}

.end {
    color: #00f;
}

.filter {
    position: absolute;
    right: 0;
    bottom: 1px;
    width: 21px;
    height: 21px;
    background: linear-gradient(#fff, #e3e7ee);
    border: 1px solid #a9b0bb;
}

.filter::after {
    content: "";
    margin: auto;
    border: 4px solid transparent;
    border-top: 5px solid #666;
    border-bottom: none;
}

td.active-cell {
    overflow: visible;
    z-index: 1;
}

td.active-cell::before {
    content: "";
    position: absolute;
    inset: -2px;
    border: 2px solid #217346;
}

td.active-cell::after {
    content: "";
    position: absolute;
    right: -4px;
    bottom: -4px;
    width: 6px;
    height: 6px;
    background: #217346;
    outline: 1px solid #fff;
}

.note {
    position: absolute;
    left: 320px;
    top: 130px;
    width: 505px;
    height: 114px;
    padding: 2px 0 0 14px;
    background: #fff;
    border: 2px solid #d9000d;
    color: #000;
    font-family: "Noto Sans CJK JP", sans-serif;
    font-size: 24px;
    line-height: 22px;
    white-space: nowrap;
    z-index: 2;
}

.vscroll {
    display: flex;
    flex-direction: column;
    width: 20px;
    margin: 4px 3px 0 3px;
    background: #d9d9d9;
}

.vscroll button {
    justify-content: center;
    height: 19px;
    background: #fff;
    border: 1px solid #aaa;
    color: #666;
}

.vscroll .thumb {
    height: 21px;
    background: #fff;
    border: 1px solid #aaa;
}

.vscroll .down {
    margin-top: auto;
}

/* Sheet tabs */
.sheet-tabs {
    display: grid;
    grid-template-columns: 101px 176px 121px 64px 64px 50px 47px 58px 138px 134px 87px 90px 212px 196px 83px 1fr 190px;
    height: 28px;
    padding-right: 26px;
    border-bottom: 1px solid #c0c0c0;
    line-height: 22px;
}

.sheet-tabs a {
    margin: 3px 0 2px;
    padding: 0 1px;
    border-right: 1px solid #aaa;
    text-align: center;
    white-space: nowrap;
    overflow: hidden;
    font-size: 16px;
    line-height: 18px;
}

.sheet-tabs span {
    display: block;
}

.sheet-tabs a.fill {
    padding: 0 2px;
    color: #111;
}

.fill span {
    height: 22px;
    overflow: hidden;
}

.blue1 span { background: #538dd5; }
.blue2 span { background: #95b3d7; }
.yellow span { background: #ffff99; }
.green span { background: #92d050; }

.red span {
    background: #f00;
    color: #fff;
}

.sheet-tabs a.purple {
    border: none;
    padding-right: 0;
}

.purple span {
    padding-left: 13px;
    background: #8064a2;
    color: #fff;
}

.sheet-tabs a.current {
    margin: 0 0 2px;
    padding-top: 3px;
    background: linear-gradient(#fff 30%, #fde9d9);
    border: none;
    border-bottom: 2px solid #217346;
    color: #217346;
}

.arrows {
    display: flex;
    align-items: center;
    gap: 21px;
    padding-left: 28px;
    border-right: 1px solid #aaa;
    margin: 3px 0 4px;
}

.tab-tools {
    display: flex;
    align-items: center;
    gap: 12px;
    padding-left: 7px;
}

.tab-tools .dots {
    margin-left: 4px;
}

.hscroll {
    display: flex;
    margin: 5px 0 4px;
}

.hscroll button {
    width: 20px;
    justify-content: center;
    background: #fff;
    border: 1px solid #aaa;
}

.hscroll .thumb {
    flex: 1;
    margin: 0 12px 0 -1px;
    background: #fff;
    border: 1px solid #aaa;
}

/* Status bar */
.status {
    display: flex;
    align-items: center;
    height: 26px;
    padding: 0 10px;
    background: #f3f2f1;
    line-height: 20px;
}

.macro {
    margin-right: auto;
}

.view {
    width: 50px;
    height: 26px;
    justify-content: center;
}

.view.on {
    background: #c8c6c4;
}

.zoom-btn {
    margin: 0 6px;
}

.zoom {
    appearance: none;
    width: 126px;
    height: 16px;
}

.zoom::-webkit-slider-runnable-track {
    height: 16px;
    background: linear-gradient(#aaa, #aaa) no-repeat center / 100% 1px;
}

.zoom::-webkit-slider-thumb {
    appearance: none;
    width: 6px;
    height: 16px;
    background: #666;
}

.percent-text {
    width: 43px;
    margin-left: 9px;
    text-align: right;
    font-size: 16px;
}

/* Alert */
.dialog {
    position: absolute;
    left: 727px;
    top: 496px;
    width: 486px;
    background: #f0f0f0;
    border: 1px solid #e8b93a;
    box-shadow: 0 4px 16px rgba(0, 0, 0, 0.4);
    color: #111;
    z-index: 10;
}

.dialog-title {
    display: flex;
    align-items: center;
    justify-content: space-between;
    height: 37px;
    padding: 0 15px 0 9px;
    background: #ffb900;
    color: #4a3600;
    font-size: 14px;
}

.dialog-msg {
    display: flex;
    align-items: center;
    gap: 16px;
    padding: 19px 16px 0;
    font-size: 13px;
    white-space: nowrap;
}

.ok {
    justify-content: center;
    width: 106px;
    height: 31px;
    margin: 13px auto 10px;
    background: #e1e1e1;
    border: 2px solid #0078d7;
}
```
